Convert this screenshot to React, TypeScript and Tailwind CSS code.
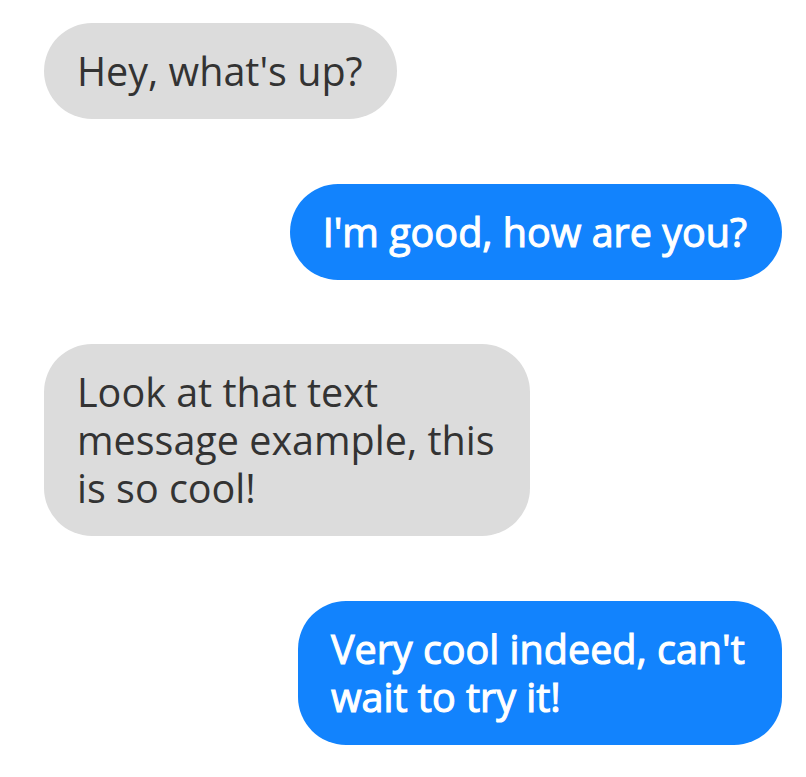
import React from "react";

type Msg = { text: string; me: boolean; max: string };

const messages: Msg[] = [
  { text: "Hey, what's up?", me: false, max: "" },
  { text: "I'm good, how are you?", me: true, max: "whitespace-nowrap" },
  { text: "Look at that text message example, this is so cool!", me: false, max: "max-w-[486px]" },
  { text: "Very cool indeed, can't wait to try it!", me: true, max: "max-w-[484px]" },
];

export default function App() {
  return (
    <div
      className="min-h-screen bg-white pt-[23px] pl-[44px] pr-[24px] flex flex-col gap-[64.5px]"
      style={{ fontFamily: '"Open Sans", "Noto Sans", sans-serif' }}
    >
      {messages.map((m, i) => (
        <div key={i} className={m.me ? "flex justify-end" : "flex justify-start"}>
          <div
            className={
              (m.me
                ? "rounded-[48px] bg-[#1283fd] pl-[33px] pr-[35px] py-[24px] text-[39.5px] leading-[48px] text-white [-webkit-text-stroke:1.1px_white] "
                : "rounded-[48px] bg-[#dcdcdc] pl-[33px] pr-[34px] py-[24px] text-[39.5px] leading-[48px] text-[#333333] ") + m.max
            }
          >
            {m.text}
          </div>
        </div>
      ))}
    </div>
  );
}
